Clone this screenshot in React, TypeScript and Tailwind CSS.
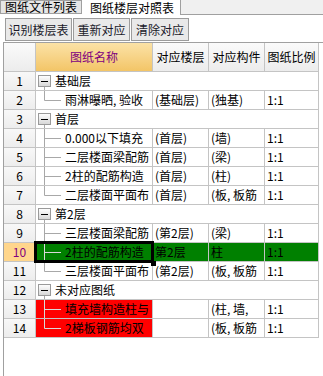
import React from "react";

type Row = {
  n: number;
  kind: "group" | "child";
  name: string;
  last?: boolean;
  floor?: string;
  part?: string;
  scale?: string;
  state?: "sel" | "red";
};

const rows: Row[] = [
  { n: 1, kind: "group", name: "基础层" },
  { n: 2, kind: "child", name: "雨淋曝晒, 验收", last: true, floor: "(基础层)", part: "(独基)", scale: "1:1" },
  { n: 3, kind: "group", name: "首层" },
  { n: 4, kind: "child", name: "0.000以下填充", floor: "(首层)", part: "(墙)", scale: "1:1" },
  { n: 5, kind: "child", name: "二层楼面梁配筋", floor: "(首层)", part: "(梁)", scale: "1:1" },
  { n: 6, kind: "child", name: "2柱的配筋构造", floor: "(首层)", part: "(柱)", scale: "1:1" },
  { n: 7, kind: "child", name: "二层楼面平面布", last: true, floor: "(首层)", part: "(板, 板筋", scale: "1:1" },
  { n: 8, kind: "group", name: "第2层" },
  { n: 9, kind: "child", name: "三层楼面梁配筋", floor: "(第2层)", part: "(梁)", scale: "1:1" },
  { n: 10, kind: "child", name: "2柱的配筋构造", floor: "第2层", part: "柱", scale: "1:1", state: "sel" },
  { n: 11, kind: "child", name: "三层楼面平面布", last: true, floor: "(第2层)", part: "(板, 板筋", scale: "1:1" },
  { n: 12, kind: "group", name: "未对应图纸" },
  { n: 13, kind: "child", name: "填充墙构造柱与", floor: "", part: "(柱, 墙,", scale: "1:1", state: "red" },
  { n: 14, kind: "child", name: "2梯板钢筋均双", last: true, floor: "", part: "(板, 板筋", scale: "1:1", state: "red" },
];

function Connector({ last, light }: { last?: boolean; light?: boolean }) {
  const c = light ? "#d8d8d8" : "#a8a8a8";
  return (
    <svg width="29" height="18" className="shrink-0">
      <line x1="8.5" y1="0" x2="8.5" y2={last ? 9.5 : 18} stroke={c} />
      <line x1="8.5" y1="9.5" x2="25" y2="9.5" stroke={c} />
    </svg>
  );
}

function MinusBox() {
  return (
    <svg width="19" height="18" className="shrink-0">
      <defs>
        <linearGradient id="mb" x1="0" y1="0" x2="0" y2="1">
          <stop offset="0" stopColor="#ffffff" />
          <stop offset="1" stopColor="#d6d6d6" />
        </linearGradient>
      </defs>
      <line x1="8.5" y1="14" x2="8.5" y2="18" stroke="#a8a8a8" />
      <rect x="2.5" y="3.5" width="12" height="11" fill="url(#mb)" stroke="#9a9a9a" />
      <line x1="5" y1="9.5" x2="12" y2="9.5" stroke="#000" />
    </svg>
  );
}

export default function App() {
  return (
    <div className="w-[323px] h-[376px] bg-white overflow-hidden flex flex-col text-[12px] leading-[14px] text-black font-['Noto_Sans_CJK_SC',sans-serif]">
      {/* tabs */}
      <div className="flex h-[15px] shrink-0">
        <div className="w-[82px] h-[14px] border border-[#a0a0a0] bg-[#e6e6e6] pl-[4px] flex items-center leading-[12px]">
          图纸文件列表
        </div>
        <div className="w-[99px] h-[15px] bg-white border-r border-[#a0a0a0] pl-[8px] flex items-center leading-[12px]">
          图纸楼层对照表
        </div>
        <div className="flex-1 h-[15px] bg-[#f0f0f0] border-b border-[#a0a0a0]" />
      </div>

      {/* toolbar */}
      <div className="h-[27px] shrink-0 flex items-start gap-[1px] pt-[3px] pl-[5px]">
        {[
          { t: "识别楼层表", w: "w-[67px]" },
          { t: "重新对应", w: "w-[57px]" },
          { t: "清除对应", w: "w-[58px]" },
        ].map((b) => (
          <button
            key={b.t}
            className={`${b.w} h-[23px] border border-[#9c9c9c] bg-[#e9e9e9] flex items-center justify-center text-[#1a1a2a]`}
          >
            {b.t}
          </button>
        ))}
      </div>

      {/* grid */}
      <div className="flex-1 ml-[3px] border-l border-t border-[#a0a0a0] flex flex-col">
        <div className="flex h-[29px] shrink-0">
          <div className="w-[32px] border-r border-b border-[#c4c4c4] bg-linear-to-b from-[#fafafa] to-[#ececec]" />
          <div className="w-[117px] border-r border-b border-[#c4c4c4] bg-linear-to-b from-[#fbe2a6] to-[#f3c566] flex items-center justify-center text-[#800080]">
            图纸名称
          </div>
          <div className="w-[56px] border-r border-b border-[#c4c4c4] bg-linear-to-b from-[#fafafa] to-[#ececec] flex items-center justify-center">
            对应楼层
          </div>
          <div className="w-[56px] border-r border-b border-[#c4c4c4] bg-linear-to-b from-[#fafafa] to-[#ececec] flex items-center justify-center">
            对应构件
          </div>
          <div className="w-[54px] border-r border-b border-[#c4c4c4] bg-linear-to-b from-[#fafafa] to-[#ececec] flex items-center justify-center">
            图纸比例
          </div>
        </div>

        {rows.map((r) => {
          const sel = r.state === "sel";
          const red = r.state === "red";
          return (
            <div key={r.n} className="flex h-[19px] shrink-0">
              <div
                className={`w-[32px] border-r border-b border-[#c4c4c4] flex items-center justify-center ${
                  sel ? "bg-[#ffd68c] text-[#800080]" : "bg-linear-to-b from-[#f8f8f8] to-[#ededed]"
                }`}
              >
                {r.n}
              </div>
              {r.kind === "group" ? (
                <div className="w-[283px] border-r border-b border-[#c4c4c4] flex items-center">
                  <MinusBox />
                  <span className="whitespace-nowrap">{r.name}</span>
                </div>
              ) : (
                <>
                  <div
                    className={`relative w-[117px] border-r border-b border-[#c4c4c4] flex items-center ${
                      sel ? "bg-[#008000]" : red ? "bg-[#ff0000]" : ""
                    }`}
                  >
                    <Connector last={r.last} light={sel || red} />
                    <span className="whitespace-nowrap overflow-hidden">{r.name}</span>
                    {sel && (
                      <>
                        <div className="absolute -left-[2px] -top-[2px] -right-[2px] -bottom-[2px] border-[3px] border-black z-10" />
                        <div className="absolute -right-[4px] -bottom-[5px] w-[5px] h-[5px] bg-black z-10" />
                      </>
                    )}
                  </div>
                  <div
                    className={`w-[56px] border-r border-b border-[#c4c4c4] flex items-center pl-[2px] whitespace-nowrap overflow-hidden ${
                      sel ? "bg-[#008000]" : ""
                    }`}
                  >
                    {r.floor}
                  </div>
                  <div
                    className={`w-[56px] border-r border-b border-[#c4c4c4] flex items-center pl-[2px] whitespace-nowrap overflow-hidden ${
                      sel ? "bg-[#008000]" : ""
                    }`}
                  >
                    {r.part}
                  </div>
                  <div
                    className={`w-[54px] border-r border-b border-[#c4c4c4] flex items-center pl-[2px] whitespace-nowrap overflow-hidden ${
                      sel ? "bg-[#008000]" : ""
                    }`}
                  >
                    {r.scale}
                  </div>
                </>
              )}
            </div>
          );
        })}
      </div>
    </div>
  );
}
